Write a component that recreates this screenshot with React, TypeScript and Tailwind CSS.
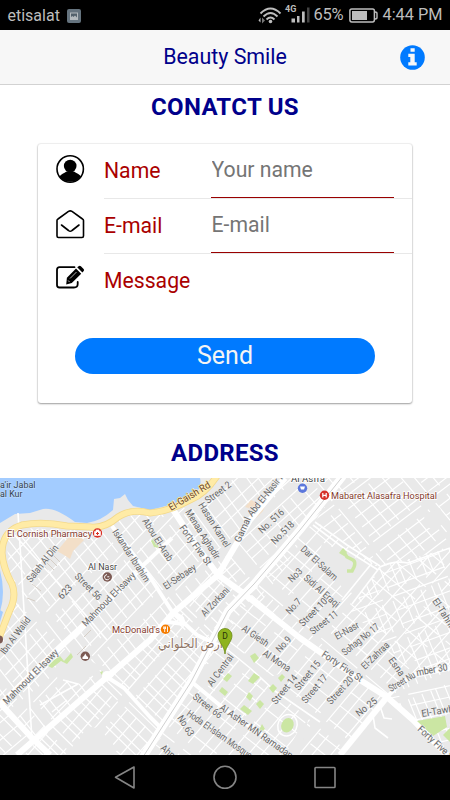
import React from 'react';

type Point = [number, number];
type Label = [string, number, number, number, number];

interface District {
  id: string;
  area: string;
  angles: [number, number];
  gaps: [number, number];
}

const districts: District[] = [
  { id: 'west', area: '6,535 22,528 100,531 130,514 172,512 218,575 173,613 107,677 32,738 0,703 0,640 12,600', angles: [-46, 52], gaps: [13, 11] },
  { id: 'beach', area: '172,508 217,478 285,478 237,543 218,575', angles: [-43, 54], gaps: [13, 12] },
  { id: 'nasir', area: '285,478 343,478 258,607 218,575 237,543', angles: [-42, 50], gaps: [11, 14] },
  { id: 'central', area: '107,677 173,613 218,578 250,600 143,755 17,755', angles: [-49, 44], gaps: [11, 9] },
  { id: 'corner', area: '0,705 32,738 17,755 0,755', angles: [-40, 45], gaps: [12, 12] },
  { id: 'south', area: '245,597 387,697 340,755 150,755 193,683', angles: [-50, 38], gaps: [13, 16] },
  { id: 'hospital', area: '343,478 450,478 450,548 400,562 380,567 315,522', angles: [-37, 50], gaps: [10, 13] },
  { id: 'east', area: '300,535 315,522 380,567 450,548 450,670 417,673 387,697 250,597', angles: [-48, 40], gaps: [11, 15] },
  { id: 'fan', area: '380,567 450,548 450,670 417,673 390,650 350,610', angles: [-20, 68], gaps: [13, 10] },
  { id: 'tawheed', area: '387,697 417,673 450,670 450,755', angles: [-12, 68], gaps: [14, 8] },
];

const labels: Label[] = [
  ['Salah Al Din', 31, 583, 59, 548],
  ['Street 56', 74, 577, 98, 601],
  ['623', 62, 600, 73, 588],
  ['Mahmoud El-Isawy', 86, 627, 136, 576],
  ['Mahmoud El-Isawy', 7, 705, 59, 653],
  ['Iskandar Ibrahim', 112, 532, 145, 583],
  ['Abou El-Arab', 142, 521, 168, 562],
  ['El-Sebaey', 166, 590, 197, 569],
  ['Street 2', 208, 504, 232, 486],
  ['Menaa Aghadir', 185, 512, 215, 560],
  ['Hasan Kamel', 198, 505, 225, 548],
  ['Forty Five St', 179, 528, 207, 566],
  ['Gamal', 240, 543, 251, 519],
  ['Abd El-Nasir R', 252, 517, 285, 476],
  ['No. 516', 262, 534, 285, 513],
  ['No.518', 275, 545, 295, 525],
  ['Dar El-Salam', 300, 550, 334, 581],
  ['No3', 292, 583, 303, 572],
  ['Sidi Al Eraqi', 303, 579, 336, 608],
  ['No.7', 290, 615, 302, 602],
  ['Street 10', 303, 627, 328, 602],
  ['Street 11', 313, 635, 339, 615],
  ['El-Tahrir', 432, 601, 450, 629],
  ['Al Zorkani', 205, 617, 230, 591],
  ['Al Giesh', 241, 630, 266, 647],
  ['Al Mona', 262, 655, 288, 672],
  ['No.9', 280, 653, 292, 640],
  ['Al Central', 212, 687, 234, 657],
  ['Street 14', 276, 705, 298, 678],
  ['Street 15', 299, 691, 321, 664],
  ['Street 17', 306, 704, 328, 678],
  ['Street 20', 331, 705, 354, 680],
  ['No 25', 359, 717, 378, 702],
  ['Street 66', 192, 698, 219, 719],
  ['Al Asher MN Ramadan', 219, 709, 290, 759],
  ['Hoda El-Islam Mosque', 186, 715, 249, 759],
  ['No.63', 177, 718, 189, 737],
  ['Ahmed', 160, 749, 181, 767],
  ['El-Nasr', 337, 640, 360, 627],
  ['Sohag No 17', 345, 656, 380, 628],
  ['El-Zahraa', 365, 670, 390, 646],
  ['Forty Five St', 321, 656, 360, 682],
  ['Esna', 388, 660, 400, 677],
  ['Street Nu', 391, 692, 416, 677],
  ['mber 30', 417, 676, 448, 670],
  ['El-Tawheed', 422, 717, 469, 709],
  ['Forty Five St', 417, 730, 452, 762],
  ['Ibn Al Walid', 5, 655, 31, 620],
];

const mainRoads = [
  'M172 508 L196 545 L218 575 L243 593 L300 638 L360 680 L387 697 L413 720 L447 755',
  'M285 478 L250 520 L237 543 L218 575 L173 613 L150 640 L107 677 L17 755',
  'M0 705 L57 650 L97 613 L136 572',
  'M0 703 L32 738 L50 755',
  'M340 755 L387 697',
];

const sideRoads = [
  'M112 526 L150 577 L173 613 L197 635 L228 650',
  'M136 572 L172 538',
  'M107 677 L124 688 L150 717 L160 727',
  'M193 683 L222 707 L287 752',
  'M387 697 L402 682 L417 673 L450 668',
  'M168 618 Q172 610 182 618 L184 624 L168 622',
];

const thinRoads = [
  'M315 522 L347 545 L380 566 M313 525 L345 549 L378 570',
  'M380 567 Q394 560 408 563 L450 548',
  'M380 567 L352 604 M372 563 L342 600',
  'M18 513 L32 740 M10 530 L60 585 L107 640',
  'M67 700 L52 712 M40 705 L78 684 L63 680',
  'M373 715 L375 728 L388 738 M380 706 L384 718 L392 719',
  'M228 650 L250 668 L275 691 L320 722',
];

const blanks = [
  '322,542 342,552 378,567 358,596 346,590 318,566',
  '55,668 72,650 103,668 80,684 66,680 58,681',
  '387,705 410,722 437,755 345,755',
  '85,730 98,727 118,750 110,755 70,755',
  '267,678 285,672 288,693 272,698',
  '198,690 193,676 213,660 226,668 212,684',
  '424,514 440,508 446,522 434,530 425,526',
  '300,728 308,720 300,755 285,755',
];

const parks = [
  '250,656 255,653 259,658 254,663',
  '223,679 228,673 232,676 227,682',
  '248,681 254,673 260,677 253,684',
  '278,678 282,674 285,677 281,682',
  '269,688 273,684 277,688 273,693',
  '219,691 222,687 228,692 225,696',
  '246,697 249,692 253,696 250,701',
  '256,704 260,700 264,704 260,709',
  '240,709 244,705 252,711 248,715',
  '259,730 262,724 265,729 261,732',
  '417,721 445,716 447,727 433,736',
  '443,735 450,728 450,742',
  '48,666 54,660 60,656 64,661 71,653 73,657 67,664 61,661 52,668',
  '151,541 155,538 159,548 154,547',
  '100,672 103,671 102,675',
];

const coastRoad =
  'M217 476 Q205 494 190 500 Q170 511 150 513 Q132 508 118 517 Q104 529 90 527 L67 526 Q42 521 22 525 Q2 531 2 553 Q3 568 12 584 Q17 597 9 612 L-1 638';
const highway = 'M343 476 L300 530 L254 584 L228 611 L191 682 L143 757';

function streetGrid(angle: number, gap: number) {
  const rad = (angle * Math.PI) / 180;
  const along: Point = [Math.cos(rad) * 300, Math.sin(rad) * 300];
  const across: Point = [-Math.sin(rad), Math.cos(rad)];
  let d = '';
  for (let i = -30; i < 31; i++) {
    const offset = i * gap + (i % 3) * 1.4;
    const x = 225 + across[0] * offset;
    const y = 616 + across[1] * offset;
    d += `M${(x - along[0]).toFixed(1)} ${(y - along[1]).toFixed(1)} L${(x + along[0]).toFixed(1)} ${(y + along[1]).toFixed(1)}`;
  }
  return d;
}

const StreetLabel = ({ label }: { label: Label }) => {
  const [text, x1, y1, x2, y2] = label;
  const angle = (Math.atan2(y2 - y1, x2 - x1) * 180) / Math.PI;
  return (
    <text
      transform={`translate(${x1} ${y1}) rotate(${angle.toFixed(1)})`}
      textLength={Math.hypot(x2 - x1, y2 - y1).toFixed(1)}
      lengthAdjust="spacingAndGlyphs"
    >
      {text}
    </text>
  );
};

const CityMap = () => (
  <svg viewBox="0 478 450 277" className="block h-[277px] w-full bg-[#e9e9e9] font-['Roboto','DejaVu_Sans',sans-serif]">
    <defs>
      {districts.map((d) => (
        <clipPath id={d.id} key={d.id}>
          <polygon points={d.area} />
        </clipPath>
      ))}
    </defs>

    <path d="M0 478 H200 Q203 490 190 497 Q176 504 150 510 L133 506 L128 500 L125 494 L120 498 L114 499 L113 510 Q101 521 87 523 L75 522 Q55 507 43 509 L30 513 L15 514 L0 523Z" fill="#a3ccff" />
    <path d="M0 570 Q6 593 0 612Z M0 610 L3 612 L0 622Z" fill="#a3ccff" />

    <g fill="none" stroke="#fff" strokeWidth="1.2">
      {districts.map((d) => (
        <g key={d.id} clipPath={`url(#${d.id})`}>
          <path d={streetGrid(d.angles[0], d.gaps[0])} strokeDasharray="96 9 60 14" />
          <path d={streetGrid(d.angles[1], d.gaps[1])} strokeDasharray="47 11 29 10" />
        </g>
      ))}
    </g>

    <g fill="#e9e9e9">
      {blanks.map((points) => <polygon key={points} points={points} />)}
    </g>
    <g fill="#f3dfc8">
      <polygon points="57,551 68,538 76,534 84,540 73,551 70,559 64,555" />
      <polygon points="245,507 251,500 265,506 263,511 256,518 252,509" />
    </g>
    <path d="M45 567 L50 575 M47 563 L54 570 M50 559 L57 566 M53 555 L60 562 M77 655 L86 646 M84 637 L91 630 M27 598 L35 601 M32 584 L41 591" fill="none" stroke="#d5cec6" strokeWidth="1" />

    <g fill="none" stroke="#fff" strokeLinejoin="round">
      <g strokeWidth="1.6">{thinRoads.map((d) => <path key={d} d={d} />)}</g>
      <g strokeWidth="4">{sideRoads.map((d) => <path key={d} d={d} />)}</g>
      <g strokeWidth="6">{mainRoads.map((d) => <path key={d} d={d} />)}</g>
      <path d={highway} strokeWidth="8" />
      <path d={highway} stroke="#d0d0d0" strokeWidth="1" />
    </g>
    <circle cx="107" cy="676" r="5" fill="#fff" />

    <path d={coastRoad} fill="none" stroke="#f3d98c" strokeWidth="7" />
    <path d={coastRoad} fill="none" stroke="#ffeba6" strokeWidth="5.4" />

    <g fill="#cbe6a3">
      {parks.map((points) => <polygon key={points} points={points} />)}
      <ellipse cx="287.5" cy="725" rx="9.5" ry="11" fill="none" stroke="#fff" strokeWidth="1.5" transform="rotate(25 287 725)" />
      <ellipse cx="287.5" cy="725" rx="6" ry="7.5" transform="rotate(25 287 725)" />
    </g>
    <path d="M343 551 L347 557 L353 560 Q356 562 354 567 L352 571 L347 571" fill="none" stroke="#cbe6a3" strokeWidth="3.5" />
    <polygon points="343,548 347,552 344,556 339,553" fill="#cbe6a3" />

    <g fill="#666" stroke="#f0f0f0" strokeWidth="1.2" paintOrder="stroke" fontSize="9.8">
      {labels.map((label, i) => <StreetLabel key={i} label={label} />)}
    </g>

    <g stroke="#fff" strokeWidth="1.6" paintOrder="stroke" fontSize="9.8">
      <g fill="#2f3e50" stroke="#c5dffd" strokeWidth="1">
        <text x="0" y="487.5" textLength="35.5" lengthAdjust="spacingAndGlyphs">a'ir Jabal</text>
        <text x="0" y="497" textLength="22.5" lengthAdjust="spacingAndGlyphs">al Kur</text>
      </g>
      <g fill="#444">
        <text x="88" y="569.5" textLength="29" lengthAdjust="spacingAndGlyphs">Al Nasr</text>
        <text x="291" y="481.5" textLength="34" lengthAdjust="spacingAndGlyphs">Al Asfra</text>
      </g>
      <g fill="#83392c">
        <text x="7" y="536.5" textLength="85" lengthAdjust="spacingAndGlyphs">El Cornish Pharmacy</text>
        <text x="331" y="498.5" textLength="106" lengthAdjust="spacingAndGlyphs">Mabaret Alasafra Hospital</text>
        <text x="112" y="632.5" textLength="48" lengthAdjust="spacingAndGlyphs">McDonald's</text>
      </g>
      <text transform="translate(171 511) rotate(-31)" fill="#6d4529" stroke="#ffeeb0" textLength="47" lengthAdjust="spacingAndGlyphs">El-Gaish Rd</text>
      <text x="158" y="648" fill="#8f7566" fontSize="13" textLength="65" lengthAdjust="spacingAndGlyphs" direction="rtl" textAnchor="end">ارض الحلواني</text>
    </g>

    <circle cx="97.5" cy="533" r="4.7" fill="#d93025" />
    <path d="M94.5 531.5 h6 v4 h-6z M96 531.5 v-1.5 h3 v1.5" fill="#fff" stroke="#fff" strokeWidth="0.6" />
    <path d="M97.5 532 v3 M96 533.5 h3" stroke="#d93025" strokeWidth="1" />
    <circle cx="324.5" cy="495.3" r="4.7" fill="#d6332a" />
    <path d="M322.8 493 v4.6 M326.2 493 v4.6 M322.8 495.3 h3.4" stroke="#fff" strokeWidth="1.2" />
    <circle cx="302.5" cy="488.3" r="4.7" fill="#5c77dc" />
    <path d="M300 486.500 h5 l-1 3 h-3z" fill="#fff" />
    <circle cx="165.5" cy="629.3" r="4.7" fill="#f57c00" />
    <path d="M163.7 626.5 v2.5 M164.7 626.5 v5.5 M165.5 626.5 v2.5 M167.5 626.5 v5.5" stroke="#fff" strokeWidth="0.9" />
    <circle cx="107.3" cy="577" r="4.7" fill="#7d5b54" />
    <path d="M109.4 578.5 A2.6 2.6 0 1 1 107 574.6 M107.3 576.8 h2" fill="none" stroke="#fff" strokeWidth="1" />
    <circle cx="85.3" cy="656.3" r="4.7" fill="#7d5b54" />
    <path d="M82.5 659 v-2 q1.5 0 2.8 -3.5 q1.3 3.5 2.8 3.5 v2z" fill="#fff" />
    <circle cx="-1" cy="639.5" r="4" fill="#7d5b54" />

    <path d="M225 654 C224.5 646 218 642 218 635.5 A7 7 0 0 1 232 635.5 C232 642 225.5 646 225 654Z" fill="#8fb31d" stroke="#6b8a16" strokeWidth="0.8" />
    <text x="225" y="638.5" fontSize="8.5" textAnchor="middle" fill="#26330a">D</text>
  </svg>
);

const StatusBar = () => (
  <div className="flex h-[30px] items-center bg-black pt-px text-[#bdbdbd]">
    <span className="ml-[7.5px] w-[52.5px] text-[16px] leading-none">etisalat</span>
    <svg className="ml-[7px] h-[14px] w-[14px]" viewBox="0 0 14 14">
      <rect width="14" height="14" rx="2" fill="#65737e" />
      <path d="M3 3.5 h8 v7.5 H3z" fill="#b4babe" />
      <path d="M4 4.5 h6 v4 L8 6.5 L6.5 8 L5.5 7 L4 8z" fill="#52606b" />
    </svg>
    <svg className="ml-auto h-[24px] w-[52px]" viewBox="258 4 52 24">
      <g fill="none" stroke="#bdbdbd" strokeWidth="1.9">
        <path d="M260.5 13.5 Q270.5 3.5 280.5 13.5" />
        <path d="M263.5 16.5 Q270.5 9.5 277.5 16.5" />
        <path d="M266.5 19.5 Q270.5 15.5 274.5 19.5" />
      </g>
      <circle cx="270.5" cy="21.5" r="1.8" fill="#bdbdbd" />
      <path d="M258.5 20.5 l2 -3 v5z" fill="#bdbdbd" />
      <path d="M262 17.5 l3 3 l-3 3z" fill="#777" />
      <text x="285" y="11.5" fontSize="9" fontWeight="700" fill="#bdbdbd">4G</text>
      <path d="M291.5 18.5 h3.5 v4 h-3.5z M297 16 h2.5 V22.500 h-2.5z M302 11.500 h2.7 V22.500 H302z" fill="#bdbdbd" />
      <path d="M307 7.5 h2.5 V22.500 H307z" fill="#444" />
    </svg>
    <span className="ml-[3.5px] w-[30.5px] text-[16.5px] leading-none tracking-[-0.3px]">65%</span>
    <svg className="ml-[5px] h-[15px] w-[29px]" viewBox="0 0 29 15">
      <rect x="0.9" y="0.9" width="24.5" height="13" rx="1.8" fill="none" stroke="#bdbdbd" strokeWidth="1.5" />
      <rect x="3" y="3" width="15" height="9" fill="#bdbdbd" />
      <path d="M26 4 q2 0 2 1.5 v4 q0 1.5 -2 1.5" fill="none" stroke="#bdbdbd" strokeWidth="1.4" />
    </svg>
    <span className="mr-[8px] ml-[4.5px] w-[59.5px] text-[16.3px] leading-none whitespace-nowrap">4:44 PM</span>
  </div>
);

const PersonIcon = () => (
  <svg viewBox="0 0 30 30" className="h-[30px] w-[30px]">
    <circle cx="15.2" cy="15" r="13.2" fill="none" stroke="#000" strokeWidth="1.6" />
    <circle cx="15.2" cy="12" r="6.3" />
    <path d="M4.5 22.5 C6 20 9 19.5 11.5 17.5 H19 C21.5 19.5 24.5 20 26 22.5 A13.5 13.5 0 0 1 4.5 22.5Z" />
  </svg>
);

const MailIcon = () => (
  <svg viewBox="0 0 30 30" className="h-[30px] w-[30px]" fill="none" stroke="#000" strokeLinecap="round" strokeLinejoin="round">
    <path d="M2 11.5 Q2 10.5 3 10 L13.5 2.4 Q15.2 1.4 17 2.4 L27.5 10 Q28.500 10.5 28.5 11.5 V27 Q28.5 28.500 27 28.5 H3.5 Q2 28.5 2 27Z" strokeWidth="1.6" />
    <path d="M6.5 16 L13.5 21.500 Q15.2 23 17 21.5 L24 16" strokeWidth="1.6" />
  </svg>
);

const ComposeIcon = () => (
  <svg viewBox="0 0 30 30" className="h-[30px] w-[30px]">
    <path d="M19.5 3.200 H4.500 Q2 3.200 2 5.700 V21 Q2 23.500 4.500 23.500 H19 Q22.700 23.500 22.700 20 V18" fill="none" stroke="#000" strokeWidth="1.800" strokeLinecap="round" />
    <path d="M21 4.500 L26.200 9.700 L16.800 19 L11.200 20.500 L11.900 13.700Z M22.200 3.300 L23.600 2.200 Q24.800 1.300 25.900 2.300 L28.600 5 Q29.500 6 28.700 7 L27.400 8.500Z" />
    <path d="M21.500 8 L15 14.500 M13.200 16.500 L14.500 18" stroke="#fff" strokeWidth="0.700" />
  </svg>
);

const fields = [
  { label: 'Name', placeholder: 'Your name', Icon: PersonIcon },
  { label: 'E-mail', placeholder: 'E-mail', Icon: MailIcon },
  { label: 'Message', placeholder: '', Icon: ComposeIcon },
];

const ContactForm = () => (
  <form className="mx-[38px] mt-[14px] h-[259px] rounded-[3px] bg-white shadow-[0_1px_2px_0px_rgba(0,0,0,0.35),0_0_1px_1px_rgba(0,0,0,0.06)]">
    {fields.map(({ label, placeholder, Icon }) => (
      <div key={label} className="flex h-[55px] pl-[17px]">
        <div className="w-[49px] pt-[10px]">
          <Icon />
        </div>
        <div className={placeholder ? 'flex flex-1 border-b border-[#e8e8e8]' : 'flex flex-1'}>
          <label className="w-[107px] pt-[13px] text-[21.2px] leading-[28px] text-[#aa0000]">{label}</label>
          {placeholder && (
            <input
              className="h-[54px] w-[183px] border-b border-[#990000] pb-[3px] pl-[0.5px] text-[21.2px] outline-none placeholder:text-[#757575]"
              placeholder={placeholder}
            />
          )}
        </div>
      </div>
    ))}
    <button type="button" className="mx-auto mt-[29px] block h-[36px] w-[300px] rounded-[18px] bg-[#007aff] text-[25px] leading-[36px] text-[#f4f4f4]">
      Send
    </button>
  </form>
);

const NavBar = () => (
  <div className="flex h-[45px] bg-black">
    <svg viewBox="0 755 450 45" className="h-[45px] w-full" fill="none" stroke="#858585" strokeWidth="1.6" strokeLinejoin="round">
      <path d="M115.5 777.3 L134 767 V788Z" />
      <circle cx="225" cy="777.3" r="11" />
      <rect x="315" y="767.5" width="20" height="20" rx="0.8" />
    </svg>
  </div>
);

export default function App() {
  return (
    <div className="flex h-[800px] w-[450px] flex-col overflow-hidden bg-white font-['Roboto',sans-serif]">
      <StatusBar />
      <header className="grid h-[55px] grid-cols-[1fr_auto_1fr] items-center border-b border-[#d2d2d2] bg-[#f7f7f7]">
        <span />
        <h1 className="text-[21.4px] leading-none text-[#00008b]">Beauty Smile</h1>
        <svg viewBox="0 0 25 25" className="mr-[25px] h-[25px] w-[25px] justify-self-end">
          <circle cx="12.5" cy="12.5" r="12.3" fill="#007aff" />
          <path d="M10.5 3.2 h4.2 v3.5 h-4.2z M8.3 8.7 h6.4 v8.5 h2 v3.2 h-8.4 v-3.2 h2 V12 h-2z" fill="#f7f7f7" />
        </svg>
      </header>
      <main className="flex h-[670px] flex-col">
        <h2 className="mt-[7px] text-center text-[24px] leading-[30px] font-bold tracking-[0.3px] text-[#00008b]">CONATCT US</h2>
        <div className="mt-[8px]">
          <ContactForm />
        </div>
        <h2 className="mt-[35px] mb-[10px] text-center text-[24px] leading-[30px] font-bold tracking-[0.3px] text-[#00008b]">ADDRESS</h2>
        <CityMap />
      </main>
      <NavBar />
    </div>
  );
}
